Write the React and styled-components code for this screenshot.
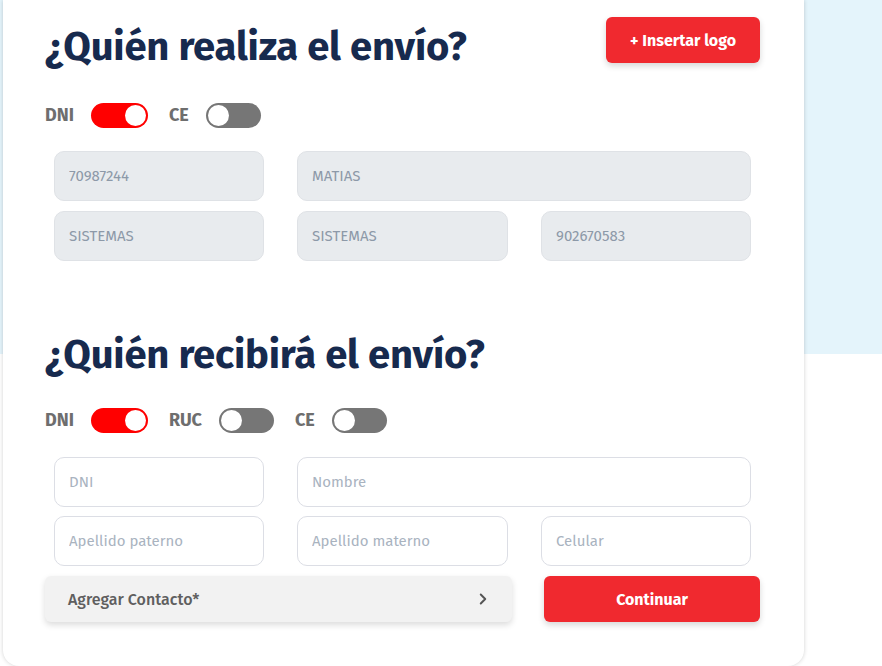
import React from 'react';
import styled, { createGlobalStyle } from 'styled-components';
import { ChevronRight } from 'lucide-react';

const GlobalStyle = createGlobalStyle`
  html, body { margin: 0; padding: 0; }
  body {
    font-family: 'Fira Sans', 'Noto Sans', 'Open Sans', sans-serif;
    background: #fff;
    overflow: hidden;
  }
  * { box-sizing: border-box; }
`;

const Page = styled.div`
  width: 882px;
  height: 666px;
  background: linear-gradient(to bottom, #e4f4fb 0, #e4f4fb 354px, #fff 354px);
  overflow: hidden;
`;

const Card = styled.div`
  width: 801px;
  margin-left: 3px;
  background: #fff;
  border-radius: 0 0 16px 16px;
  box-shadow: 0 0 4px rgba(0, 0, 0, 0.18);
  padding: 17px 44px 44px 42px;
`;

const Header = styled.div`
  display: flex;
  align-items: flex-start;
  justify-content: space-between;

  & > h2 { margin-top: 7px; }
`;

const Title = styled.h2`
  margin: 0;
  font-size: 40px;
  font-weight: 700;
  color: #172a4e;
  letter-spacing: -0.2px;
  line-height: 46px;
`;

const RedButton = styled.button`
  border: none;
  background: #f0292f;
  color: #fff;
  font-family: inherit;
  font-weight: 700;
  font-size: 16px;
  border-radius: 6px;
  height: 46px;
  width: ${({ width }) => width}px;
  box-shadow: 0 3px 6px rgba(0, 0, 0, 0.16);
  cursor: pointer;
`;

const ToggleRow = styled.div`
  display: flex;
  align-items: center;
  height: 26px;
  margin-top: ${({ top }) => top}px;
`;

const ToggleLabel = styled.span`
  font-size: 18px;
  font-weight: 700;
  color: #6e6e6e;
  margin-right: 17px;
`;

const Track = styled.span`
  position: relative;
  display: inline-block;
  width: ${({ w }) => w || 57}px;
  height: 25px;
  border-radius: 13px;
  background: ${({ on }) => (on ? '#ff0000' : '#767676')};
  margin-right: 21px;

  &::after {
    content: '';
    position: absolute;
    top: 2px;
    ${({ on }) => (on ? 'right: 2px;' : 'left: 2px;')}
    width: 21px;
    height: 21px;
    border-radius: 50%;
    background: #fff;
  }
`;

const Grid = styled.div`
  display: grid;
  grid-template-columns: 210px 211px 210px;
  column-gap: 33px;
  row-gap: ${({ gap }) => gap}px;
  margin: ${({ top }) => top}px 9px 0;
`;

const Field = styled.input`
  height: 50px;
  width: 100%;
  grid-column: ${({ span }) => (span ? 'span 2' : 'auto')};
  border-radius: 10px;
  border: 1px solid ${({ filled }) => (filled ? '#dfe2e6' : '#dcdee5')};
  background: ${({ filled }) => (filled ? '#e8ebee' : '#fff')};
  padding: 0 14px;
  font-family: inherit;
  font-size: 15px;
  color: #8d99a8;
  outline: none;

  &::placeholder { color: #a9b3bf; }
`;

const Section = styled.div`
  margin-top: ${({ top }) => top}px;
`;

const Footer = styled.div`
  display: flex;
  justify-content: space-between;
  margin-top: 10px;
`;

const ContactBar = styled.div`
  width: 467px;
  height: 46px;
  display: flex;
  align-items: center;
  justify-content: space-between;
  padding: 0 20px 0 23px;
  background: #f2f2f2;
  border-radius: 6px;
  box-shadow: 0 3px 6px rgba(0, 0, 0, 0.14);
  font-size: 16px;
  font-weight: 500;
  color: #5f5f5f;
`;

const Toggle = ({ label, on, w }) => (
  <>
    <ToggleLabel>{label}</ToggleLabel>
    <Track on={on ? 1 : 0} w={w} />
  </>
);

export default function App() {
  return (
    <>
      <GlobalStyle />
      <Page>
        <Card>
          <Header>
            <Title>¿Quién realiza el envío?</Title>
            <RedButton width={154}>+ Insertar logo</RedButton>
          </Header>
          <ToggleRow top={32}>
            <Toggle label="DNI" on />
            <Toggle label="CE" w={55} />
          </ToggleRow>
          <Grid top={23} gap={10}>
            <Field filled readOnly value="70987244" />
            <Field filled span readOnly value="MATIAS" />
            <Field filled readOnly value="SISTEMAS" />
            <Field filled readOnly value="SISTEMAS" />
            <Field filled readOnly value="902670583" />
          </Grid>
          <Section top={71}>
            <Title>¿Quién recibirá el envío?</Title>
          </Section>
          <ToggleRow top={29}>
            <Toggle label="DNI" on />
            <Toggle label="RUC" w={55} />
            <Toggle label="CE" w={55} />
          </ToggleRow>
          <Grid top={24} gap={9}>
            <Field placeholder="DNI" />
            <Field span placeholder="Nombre" />
            <Field placeholder="Apellido paterno" />
            <Field placeholder="Apellido materno" />
            <Field placeholder="Celular" />
          </Grid>
          <Footer>
            <ContactBar>
              Agregar Contacto*
              <ChevronRight size={18} strokeWidth={2.6} color="#555" />
            </ContactBar>
            <RedButton width={216}>Continuar</RedButton>
          </Footer>
        </Card>
      </Page>
    </>
  );
}
